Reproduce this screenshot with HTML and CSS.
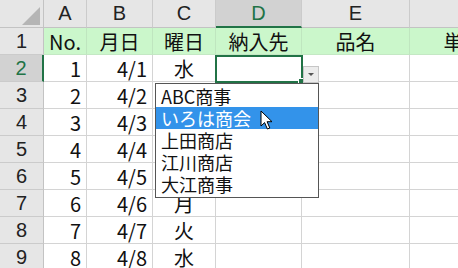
FILE: index.html
```html
<!DOCTYPE html>
<html lang="ja">
<head>
<meta charset="utf-8">
<link rel="stylesheet" href="styles.css">
</head>
<body>
<div class="wrap">
  <div class="sheet">
    <div class="corner"><span class="tri"></span></div>
    <div class="ch">A</div>
    <div class="ch">B</div>
    <div class="ch">C</div>
    <div class="ch sel">D</div>
    <div class="ch">E</div>
    <div class="ch"></div>

    <div class="rh">1</div>
    <div class="c g ctr">No.</div>
    <div class="c g ctr">月日</div>
    <div class="c g ctr">曜日</div>
    <div class="c g ctr">納入先</div>
    <div class="c g ctr">品名</div>
    <div class="c g ctr">単価</div>

    <div class="rh sel">2</div>
    <div class="c r">1</div>
    <div class="c r">4/1</div>
    <div class="c ctr">水</div>
    <div class="c"></div>
    <div class="c"></div>
    <div class="c"></div>

    <div class="rh">3</div>
    <div class="c r">2</div>
    <div class="c r">4/2</div>
    <div class="c ctr">木</div>
    <div class="c"></div>
    <div class="c"></div>
    <div class="c"></div>

    <div class="rh">4</div>
    <div class="c r">3</div>
    <div class="c r">4/3</div>
    <div class="c ctr">金</div>
    <div class="c"></div>
    <div class="c"></div>
    <div class="c"></div>

    <div class="rh">5</div>
    <div class="c r">4</div>
    <div class="c r">4/4</div>
    <div class="c ctr">土</div>
    <div class="c"></div>
    <div class="c"></div>
    <div class="c"></div>

    <div class="rh">6</div>
    <div class="c r">5</div>
    <div class="c r">4/5</div>
    <div class="c ctr">日</div>
    <div class="c"></div>
    <div class="c"></div>
    <div class="c"></div>

    <div class="rh">7</div>
    <div class="c r">6</div>
    <div class="c r">4/6</div>
    <div class="c ctr">月</div>
    <div class="c"></div>
    <div class="c"></div>
    <div class="c"></div>

    <div class="rh">8</div>
    <div class="c r">7</div>
    <div class="c r">4/7</div>
    <div class="c ctr">火</div>
    <div class="c"></div>
    <div class="c"></div>
    <div class="c"></div>

    <div class="rh">9</div>
    <div class="c r">8</div>
    <div class="c r">4/8</div>
    <div class="c ctr">水</div>
    <div class="c"></div>
    <div class="c"></div>
    <div class="c"></div>
  </div>

  <div class="selbox"><span class="handle"></span></div>
  <div class="ddbtn"><span class="ddarrow"></span></div>
  <ul class="ddlist">
    <li>ABC商事</li>
    <li class="hi">いろは商会</li>
    <li>上田商店</li>
    <li>江川商店</li>
    <li>大江商事</li>
  </ul>
  <svg class="cursor" width="14" height="21" viewBox="0 0 14 21">
    <path d="M1 1 L1 16 L4.6 12.6 L7.4 19 L9.8 18 L7.1 11.7 L12 11.7 Z" fill="#fff" stroke="#000" stroke-width="1" stroke-linejoin="round"/>
  </svg>
</div>
</body>
</html>
```

FILE: styles.css
```css
html, body {
  margin: 0;
  padding: 0;
  background: #fff;
  overflow: hidden;
}

.wrap {
  position: relative;
  width: 458px;
  height: 268px;
  overflow: hidden;
}

.sheet {
  display: grid;
  grid-template-columns: 44px 43px 66px 63px 86px 108px 108px;
  grid-template-rows: 28px repeat(9, 27px);
  width: 518px;
  font-family: "Noto Sans CJK JP", sans-serif;
  font-size: 20px;
  color: #111;
}

.sheet > div {
  box-sizing: border-box;
  display: flex;
  align-items: center;
  white-space: nowrap;
  overflow: hidden;
}

.corner {
  position: relative;
  background: #e6e6e6;
  border-right: 1px solid #c3c3c3;
  border-bottom: 1px solid #c3c3c3;
}

.tri {
  position: absolute;
  right: 3px;
  bottom: 2px;
  width: 0;
  height: 0;
  border-left: 18px solid transparent;
  border-bottom: 18px solid #b5b5b5;
}

.ch {
  justify-content: center;
  background: #e6e6e6;
  border-right: 1px solid #cbcbcb;
  border-bottom: 1px solid #c3c3c3;
  font-family: "Liberation Sans", Arial, sans-serif;
  font-size: 20px;
  color: #222;
}

.ch.sel {
  background: #d2d2d2;
  color: #217346;
  border-bottom: 2px solid #217346;
}

.rh {
  justify-content: center;
  background: #e6e6e6;
  border-right: 1px solid #c3c3c3;
  border-bottom: 1px solid #cbcbcb;
  font-family: "Liberation Sans", Arial, sans-serif;
  font-size: 20px;
  color: #222;
}

.rh.sel {
  background: #d2d2d2;
  color: #217346;
  border-right: 2px solid #217346;
}

.c {
  border-right: 1px solid #d4d4d4;
  border-bottom: 1px solid #d4d4d4;
  padding: 0 5px;
}

.c.g {
  background: #cbf7cb;
  border-right-color: #bfe6bf;
  border-bottom-color: #c4e8c4;
}

.c.r { justify-content: flex-end; }
.c.ctr { justify-content: center; }

.selbox {
  position: absolute;
  left: 215px;
  top: 55px;
  width: 84px;
  height: 24px;
  border: 2px solid #217346;
}

.handle {
  position: absolute;
  right: -4px;
  bottom: -4px;
  width: 5px;
  height: 5px;
  background: #217346;
  border: 1px solid #fff;
}

.ddbtn {
  position: absolute;
  left: 303px;
  top: 66px;
  width: 14px;
  height: 15px;
  background: #ececec;
  border: 1px solid #c6c6c6;
  display: flex;
  align-items: center;
  justify-content: center;
}

.ddarrow {
  width: 0;
  height: 0;
  border-left: 3px solid transparent;
  border-right: 3px solid transparent;
  border-top: 3px solid #555;
}

.ddlist {
  position: absolute;
  left: 155px;
  top: 83px;
  width: 162px;
  margin: 0;
  padding: 1px 0 2px;
  list-style: none;
  background: #fff;
  border: 1px solid #555;
  font-family: "Noto Sans CJK JP", sans-serif;
  font-size: 18px;
  color: #111;
}

.ddlist li {
  height: 22px;
  line-height: 22px;
  padding-left: 5px;
  white-space: nowrap;
}

.ddlist li.hi {
  background: #3393ea;
  color: #fff;
}

.cursor {
  position: absolute;
  left: 260px;
  top: 110px;
}
```
